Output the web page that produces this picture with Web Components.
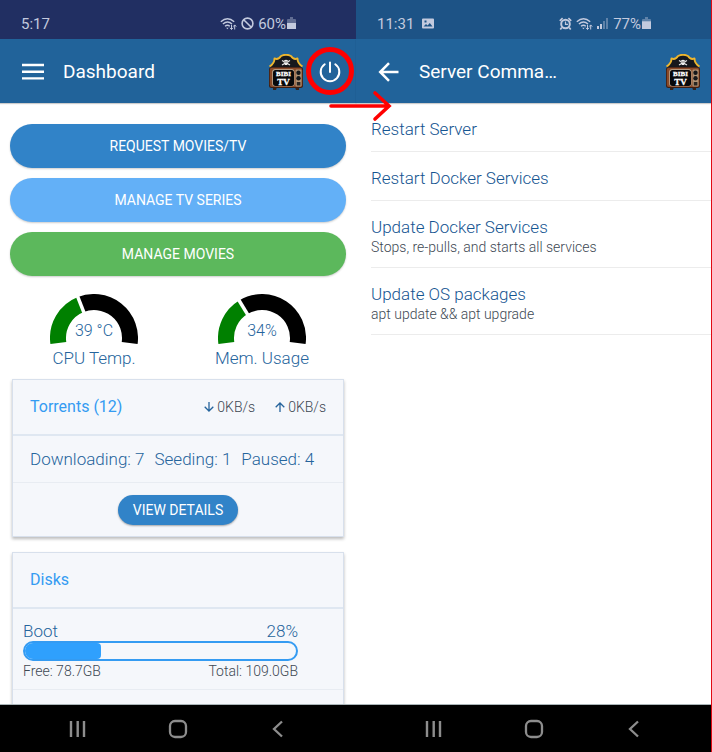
<!DOCTYPE html>
<html lang="en">
<head>
<meta charset="utf-8">
<meta name="viewport" content="width=device-width, initial-scale=1">
<title>Dashboard and server commands</title>
<style>
html, body { margin: 0; height: 100%; }
body { font-family: Roboto, "Liberation Sans", sans-serif; background: #fff; color: #25649c; }
</style>
</head>
<body>
<phone-pair>
  <phone-screen>
    <status-bar slot="status" style="--bg:#212f62" time="5:17" level="60%" icons="wifi,blocked" charge="60"></status-bar>
    <app-bar slot="bar" icon="menu" heading="Dashboard" power></app-bar>
    <main-stack>
      <pill-button style="--bg:#3183c8">REQUEST MOVIES/TV</pill-button>
      <pill-button style="--bg:#63b0f7">MANAGE TV SERIES</pill-button>
      <pill-button style="--bg:#5cb85c">MANAGE MOVIES</pill-button>
      <gauge-row>
        <arc-gauge fraction="0.39" value="39 °C" label="CPU Temp."></arc-gauge>
        <arc-gauge fraction="0.34" value="34%" label="Mem. Usage"></arc-gauge>
      </gauge-row>
      <info-card heading="Torrents (12)">
        <transfer-rate slot="extra" dir="down">0KB/s</transfer-rate>
        <transfer-rate slot="extra" dir="up">0KB/s</transfer-rate>
        <torrent-counts>
          <span>Downloading: 7</span><span>Seeding: 1</span><span>Paused: 4</span>
        </torrent-counts>
        <card-action>VIEW DETAILS</card-action>
      </info-card>
      <info-card heading="Disks" class="long">
        <disk-meter name="Boot" percent="28" free="78.7GB" total="109.0GB"></disk-meter>
      </info-card>
    </main-stack>
  </phone-screen>
  <phone-screen class="last">
    <status-bar slot="status" style="--bg:#1d5386" time="11:31" level="77%" lead="picture" icons="alarm,wifi,signal" charge="77"></status-bar>
    <app-bar slot="bar" icon="back" heading="Server Comma…"></app-bar>
    <command-list>
      <command-item>Restart Server</command-item>
      <command-item>Restart Docker Services</command-item>
      <command-item note="Stops, re-pulls, and starts all services">Update Docker Services</command-item>
      <command-item note="apt update &amp;&amp; apt upgrade">Update OS packages</command-item>
    </command-list>
  </phone-screen>
  <flow-marks slot="marks"></flow-marks>
</phone-pair>

<script>
const define = (name, css, html) => customElements.define(name, class extends HTMLElement {
  constructor() {
    super();
    const root = this.attachShadow({ mode: 'open' });
    const markup = typeof html === 'function' ? html(this) : html;
    root.innerHTML = `<style>:host,*{box-sizing:border-box}${css}</style>${markup}`;
  }
});

const icons = {
  wifi: `<svg width="17" height="14" viewBox="0 0 17 14" fill="none" stroke="currentColor" stroke-width="1.4">
    <path d="M.8 4.7Q7.5-1.300 14.200 4.700M2.900 7Q7.500 3 12 7M5 9.200Q7.500 7.200 9.800 9.200"/>
    <path d="M6.200 10.700h2.400L7.400 12.300Z" fill="currentColor" stroke="none"/>
    <path d="M11.500 7.800v4.500M10 10.800l1.500 1.700 1.500-1.700M14.700 12.500V8M13.200 9.600l1.500-1.700 1.500 1.700" stroke-width="1"/></svg>`,
  blocked: `<svg width="13" height="14" viewBox="0 0 13 14" fill="none" stroke="currentColor" stroke-width="1.6"><circle cx="6.500" cy="6.500" r="5.400"/><path d="M2.700 2.700l7.600 7.600"/></svg>`,
  alarm: `<svg width="13" height="14" viewBox="0 0 13 14" fill="none" stroke="currentColor"><circle cx="6.500" cy="7" r="4.300" stroke-width="2"/><path d="M6.500 4.500V7.300H9" stroke-width="1.200"/><path d="M.8 3.800L3.600 1.200M12.200 3.800L9.400 1.200M2.800 10.500L1.300 12.500M10.200 10.500l1.500 2" stroke-width="1.700"/></svg>`,
  signal: `<svg width="12" height="14" viewBox="0 0 12 14" fill="currentColor"><path d="M0 9h2v3H0zM3 7h2v5H3z"/><path d="M6 4h2v8H6zM9 1h2v11H9z" opacity=".4"/></svg>`,
  picture: `<svg width="12" height="14" viewBox="0 0 12 14"><path fill="currentColor" fill-rule="evenodd" d="M1 1.500h10q1 0 1 1v8q0 1-1 1H1q-1 0-1-1v-8q0-1 1-1ZM1.500 9.500h9L7.800 6 5.600 8.400 4 7ZM2.500 3.500v2h2v-2Z"/></svg>`,
  battery: c => `<svg width="9" height="14" viewBox="0 0 9 14" fill="currentColor"><path d="M3 0h3v2h2q1 0 1 1v9H0V3Q0 2 1 2h2Z" opacity=".4"/><path d="M0 ${12 - c / 10}h9V12H0Z"/></svg>`,
  menu: `<svg width="22" height="18" viewBox="0 0 22 18" stroke="#fff" stroke-width="2.400"><path d="M0 2h22M0 8.700h22M0 15.400h22"/></svg>`,
  back: `<svg width="22" height="20" viewBox="0 0 22 20" fill="none" stroke="#fff" stroke-width="2.500"><path d="M20.500 10H3M11 1.200L2.200 10 11 18.800"/></svg>`,
  power: `<svg width="22" height="22" viewBox="0 0 22 22" fill="none" stroke="#fff" stroke-width="2" stroke-linecap="round"><path d="M11 1.500V11M5.700 3.300A9.300 9.300 0 1 0 16.300 3.300"/></svg>`
};

define('phone-pair', `
  :host{position:relative;display:grid;grid-template-columns:1fr 1fr;height:100vh;min-height:480px}
`, `<slot></slot><slot name="marks"></slot>`);

define('phone-screen', `
  :host{display:flex;flex-direction:column;min-width:0;min-height:0;background:#fff}
  :host(.last){border-right:1px solid #e00a14}
  .body{flex:1;min-height:0;overflow-y:auto;scrollbar-width:none}
`, `<slot name="status"></slot><slot name="bar"></slot><div class="body"><slot></slot></div><nav-bar></nav-bar>`);

define('status-bar', `
  :host{display:flex;align-items:center;gap:8px;height:39px;padding:8px 60px 0 21px;background:var(--bg);color:#c3cade;font-size:15px;line-height:18px;flex:none}
  .right{margin-left:auto;display:flex;align-items:center;gap:4px}
  .charge{display:flex;align-items:center;gap:1px}
  svg{display:block}
`, el => `<span>${el.getAttribute('time')}</span>${el.hasAttribute('lead') ? icons[el.getAttribute('lead')] : ''}
  <div class="right">${el.getAttribute('icons').split(',').map(n => icons[n]).join('')}
  <span class="charge"><span>${el.getAttribute('level')}</span>${icons.battery(+el.getAttribute('charge'))}</span></div>`);

define('tv-logo', `:host{display:block;flex:none}svg{display:block}text{font-family:"Liberation Serif",serif;font-weight:700;fill:#fff;stroke:#fff;stroke-width:.3;text-anchor:middle}`, `
  <svg width="36" height="37" viewBox="0 0 36 37" role="img" aria-label="TV logo">
    <path d="M2 13Q6 9 6.500 4Q10 5.500 12.500 2Q18-.8 23.500 2Q26 5.500 29.500 4Q30 9 34 13Q27 16 18 15Q9 16 2 13Z" fill="#17181d"/>
    <path d="M1.500 12.500Q6.500 9.500 6.500 4.500Q10.500 6 13 2Q18-.5 23 2Q25.500 6 29.500 4.500Q29.500 9.500 34.500 12.500" fill="none" stroke="#edb62f" stroke-width="1.900" stroke-linejoin="round"/>
    <path d="M14 6.500l8 4.500M22 6.500L14 11" stroke="#e8e8e8" stroke-width="1.200"/>
    <circle cx="18" cy="8" r="2.300" fill="#eee"/><path d="M16.700 9h2.600v2h-2.600Z" fill="#eee"/>
    <path d="M16.500 7.500h1v1h-1zM18.500 7.500h1v1h-1z" fill="#111"/>
    <path d="M5 33h4l-1 3H5zM27 33h4v3h-3z" fill="#34231b"/>
    <rect x="1" y="13" width="34" height="21" rx="2.500" fill="#3b1e14"/>
    <rect x="1.800" y="13.800" width="32.400" height="19.200" rx="2" fill="#8a4a29"/>
    <rect x="4.300" y="15.300" width="22.200" height="17" rx="2.500" fill="#c4b49c"/>
    <rect x="5" y="16" width="21" height="16" rx="2.500" fill="#08090b"/>
    <rect x="27.500" y="15.500" width="6" height="17" rx="1" fill="#b09273"/>
    <circle cx="30.500" cy="18.800" r="2.200" fill="#15171a"/><circle cx="30.500" cy="24.300" r="2.200" fill="#15171a"/>
    <path d="M28.800 28h3.600v3.500h-3.600Z" fill="#292522"/>
    <text x="15.500" y="21.500" font-size="7">BIBI</text>
    <text x="15.500" y="31" font-size="9">TV</text>
  </svg>`);

define('app-bar', `
  :host{position:relative;display:flex;align-items:center;height:64px;padding:2px 10px 0 22px;background:#21639a;color:#fff;box-shadow:0 1px 1px #0003;flex:none}
  :host([power]){padding-right:15px}
  button{display:grid;place-items:center;padding:0;border:0;background:none;width:22px;height:40px;flex:none}
  h1{margin:0 0 0 19px;font-size:19px;line-height:24px;font-weight:400;flex:1;min-width:0;white-space:nowrap;overflow:hidden;text-overflow:ellipsis}
  button.power{margin-left:15px}
  svg{display:block}
`, el => `<button aria-label="${el.getAttribute('icon')}">${icons[el.getAttribute('icon')]}</button>
  <h1>${el.getAttribute('heading')}</h1><tv-logo></tv-logo>
  ${el.hasAttribute('power') ? `<button class="power" aria-label="power">${icons.power}</button>` : ''}`);

define('main-stack', `
  :host{display:flex;flex-direction:column;gap:10px;padding:21px 10px 0}
`, `<slot></slot>`);

define('pill-button', `
  :host{display:block}
  button{display:block;width:100%;height:44px;border:0;border-radius:22px;background:var(--bg);color:#fff;font:400 14px/20px Roboto,sans-serif;box-shadow:0 1px 2px #0003}
`, `<button><slot></slot></button>`);

define('gauge-row', `:host{display:grid;grid-template-columns:1fr 1fr;margin-top:8px}`, `<slot></slot>`);

define('arc-gauge', `
  :host{display:grid;justify-items:center}
  svg,.value{grid-area:1/1}
  svg{display:block}
  .value{align-self:end;font-size:16px;font-weight:300;line-height:20px;margin-bottom:4px}
  .label{font-size:17px;font-weight:300;line-height:22px;margin-top:2px}
`, el => {
  const f = +el.getAttribute('fraction'), sweep = 196, cx = 44, cy = 44;
  const pt = (deg, r) => { const a = deg * Math.PI / 180; return `${(cx + r * Math.cos(a)).toFixed(2)} ${(cy - r * Math.sin(a)).toFixed(2)}`; };
  const arc = (from, to) => `M${pt(from, 36)}A36 36 0 0 1 ${pt(to, 36)}`;
  const split = 188 - sweep * f;
  return `<svg width="88" height="51" viewBox="0 0 88 51" fill="none" stroke-width="16">
    <path d="${arc(188, split)}" stroke="#008000"/><path d="${arc(split, -8)}" stroke="#000"/>
    <path d="M${pt(split, 26)}L${pt(split, 46)}" stroke="#fff" stroke-width="3.500"/></svg>
    <span class="value">${el.getAttribute('value')}</span><span class="label">${el.getAttribute('label')}</span>`;
});

define('info-card', `
  :host{display:block;margin:0 2px 5px;background:#f5f7fb;border:1px solid #d8e0ec;box-shadow:0 2px 3px #0004}
  :host(.long){padding-bottom:40px}
  header{display:flex;align-items:center;height:56px;padding:0 17px;border-bottom:2px solid #dfe7f1}
  h2{margin:0;flex:1;font-size:16px;line-height:20px;font-weight:400;color:#349bf2}
  .extra{display:flex;gap:20px}
`, el => `<header><h2>${el.getAttribute('heading')}</h2><div class="extra"><slot name="extra"></slot></div></header><slot></slot>`);

define('transfer-rate', `
  :host{display:flex;align-items:center;gap:3px;font-size:14px;font-weight:300;line-height:20px;color:#3d4853}
`, el => `<svg width="10" height="10" viewBox="0 0 10 10" fill="none" stroke="#25649c" stroke-width="1.300"><path d="${el.getAttribute('dir') === 'up' ? 'M5 10V1M.7 5.300L5 1l4.300 4.300' : 'M5 0v9M.7 4.700L5 9l4.300-4.300'}"/></svg><slot></slot>`);

define('torrent-counts', `
  :host{display:flex;gap:10px;height:47px;align-items:center;padding:0 17px;border-bottom:1px solid #e8ecf2;font-size:17px;font-weight:300;line-height:22px;white-space:nowrap}
`, `<slot></slot>`);

define('card-action', `
  :host{display:flex;justify-content:center;align-items:center;height:53px}
  button{width:120px;height:30px;border:0;border-radius:15px;background:#3183c8;color:#fff;font:400 14px/20px Roboto,sans-serif;box-shadow:0 1px 2px #0005}
`, `<button><slot></slot></button>`);

define('disk-meter', `
  :host{display:block;padding:12px 45px 8px 10px;border-bottom:1px solid #e8ecf2}
  .line{display:flex;justify-content:space-between;font-size:17px;font-weight:300;line-height:20px}
  .note{font-size:14px;color:#3d4853}
  .track{height:20px;border:2px solid #349bf2;border-radius:10px;overflow:hidden}
  .fill{height:100%;background:#2fa0fd;border-radius:0 4px 4px 0}
`, el => {
  const a = n => el.getAttribute(n);
  return `<div class="line"><span>${a('name')}</span><span>${a('percent')}%</span></div>
  <div class="track" role="progressbar" aria-label="${a('name')}" aria-valuenow="${a('percent')}"><div class="fill" style="width:${a('percent')}%"></div></div>
  <div class="line note"><span>Free: ${a('free')}</span><span>Total: ${a('total')}</span></div>`;
});

define('command-list', `:host{display:block;padding-left:15px}`, `<slot></slot>`);

define('command-item', `
  :host{display:block;border-bottom:1px solid #ececec}
  button{display:block;width:100%;padding:15px 0 11px;border:0;background:none;text-align:left;font:300 17px/22px Roboto,sans-serif;color:#155591}
  small{display:block;font-size:14px;line-height:18px;color:#3d4853}
`, el => `<button><slot></slot>${el.hasAttribute('note') ? `<small>${el.getAttribute('note').replace(/&/g, '&amp;')}</small>` : ''}</button>`);

define('nav-bar', `
  :host{display:flex;justify-content:center;height:48px;background:#000;border-top:1px solid #aab5b8;flex:none}
  button{width:100px;padding:0;border:0;background:none;display:grid;place-items:center}
  svg{display:block}
`, `
  <button aria-label="Recent apps"><svg width="20" height="20" viewBox="0 0 20 20" stroke="#8d8d8d" stroke-width="2.400"><path d="M3 2v16M9.700 2v16M16 2v16"/></svg></button>
  <button aria-label="Home"><svg width="20" height="20" viewBox="0 0 20 20" fill="none" stroke="#8d8d8d" stroke-width="2.300"><rect x="2" y="2" width="16" height="16" rx="5"/></svg></button>
  <button aria-label="Back"><svg width="20" height="20" viewBox="0 0 20 20" fill="none" stroke="#8d8d8d" stroke-width="2.300"><path d="M14 2.500L6 10l8 7.500"/></svg></button>`);

define('flow-marks', `
  :host{position:absolute;left:50%;top:46px;margin-left:-50px;pointer-events:none}
  svg{display:block}
`, `<svg width="88" height="76" viewBox="0 0 88 76" fill="none" stroke="#f00">
  <circle cx="24" cy="25" r="21.500" stroke-width="5"/>
  <path d="M25 60h57M69 47l14 13-14 13" stroke-width="3.600" stroke-linecap="round"/></svg>`);
</script>
</body>
</html>
